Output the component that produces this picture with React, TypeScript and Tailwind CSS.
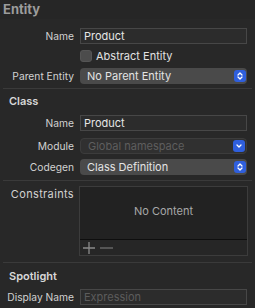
import React from 'react'

const font = { fontFamily: 'Inter, "Liberation Sans", sans-serif' }

function Stepper({ single }: { single?: boolean }) {
  return (
    <div className="w-[12px] h-[12px] rounded-[3px] bg-[#2f5fdd] flex items-center justify-center">
      <svg width="8" height="10" viewBox="0 0 8 10" fill="none" stroke="#ffffff" strokeWidth="1.3" strokeLinecap="round" strokeLinejoin="round">
        {single ? (
          <path d="M2 4l2 2 2-2" />
        ) : (
          <>
            <path d="M2 4l2-2 2 2" />
            <path d="M2 6l2 2 2-2" />
          </>
        )}
      </svg>
    </div>
  )
}

function Row({ label, children, className = '' }: { label: string; children: React.ReactNode; className?: string }) {
  return (
    <div className={`flex items-center ${className}`}>
      <div className="w-[75px] pr-[1px] text-right text-[10.25px] text-[#d2d2d2] leading-none shrink-0">{label}</div>
      <div className="ml-[5px] w-[167px]">{children}</div>
    </div>
  )
}

function Field({ value, placeholder }: { value?: string; placeholder?: string }) {
  return (
    <div className="h-[16px] border border-[#474747] bg-[#2c2c2c] flex items-center px-[3px] text-[11px] leading-none">
      {value ? <span className="text-[#e6e6e6]">{value}</span> : <span className="text-[#5c5c5c]">{placeholder}</span>}
    </div>
  )
}

function Popup({ value, disabled, single }: { value: string; disabled?: boolean; single?: boolean }) {
  return (
    <div
      className={`h-[16px] rounded-[4px] flex items-center justify-between pl-[6px] pr-[1px] text-[11px] leading-none ${
        disabled ? 'bg-[#303030] border border-[#3c3c3c] text-[#5e5e5e]' : 'bg-[#4a4a4a] text-[#e4e4e4]'
      }`}
    >
      <span className="pl-[1px]">{value}</span>
      <Stepper single={single} />
    </div>
  )
}

function SectionTitle({ children }: { children: React.ReactNode }) {
  return <div className="px-[9px] text-[11px] font-semibold text-[#d8d8d8] leading-none">{children}</div>
}

export default function App() {
  return (
    <div className="w-[255px] h-[308px] bg-[#282828] overflow-hidden" style={font}>
      <div className="h-[19px] bg-[#262626] px-[3px] pt-[3px] text-[13px] font-bold text-[#9c9c9c] leading-none">Entity</div>

      <Row label="Name" className="mt-[9px]">
        <Field value="Product" />
      </Row>
      <Row label="" className="mt-[6px]">
        <div className="flex items-center h-[12px]">
          <div className="w-[12px] h-[12px] rounded-[3px] bg-[#4c4c4c] border border-[#555555]" />
          <span className="ml-[4px] text-[11px] text-[#e2e2e2] leading-none">Abstract Entity</span>
        </div>
      </Row>
      <Row label="Parent Entity" className="mt-[6px]">
        <Popup value="No Parent Entity" />
      </Row>

      <div className="mt-[4px] mx-[3px] border-t border-[#3a3a3a]" />

      <div className="mt-[7px]">
        <SectionTitle>Class</SectionTitle>
      </div>
      <Row label="Name" className="mt-[8px]">
        <Field value="Product" />
      </Row>
      <Row label="Module" className="mt-[7px]">
        <Popup value="Global namespace" disabled single />
      </Row>
      <Row label="Codegen" className="mt-[5px]">
        <Popup value="Class Definition" />
      </Row>

      <div className="mt-[5px] mx-[3px] border-t border-[#3a3a3a]" />

      <div className="flex mt-[5px]">
        <div className="w-[75px] pr-[1px] text-right text-[11px] tracking-[0.35px] text-[#d2d2d2] leading-none pt-[3px] shrink-0">Constraints</div>
        <div className="ml-[4px] w-[169px] h-[70px] border border-[#3c3c3c] bg-[#222222] flex flex-col">
          <div className="flex-1 flex items-center justify-center text-[11px] text-[#a8a8a8] leading-none pb-[3px]">No Content</div>
          <div className="h-[16px] border-t border-[#0e0e0e] bg-[#262626] flex items-center pl-[2px] gap-[4px]">
            <svg width="14" height="14" viewBox="0 0 14 14" stroke="#8a8a8a" strokeWidth="1.3">
              <path d="M7 1v12M1 7h12" />
            </svg>
            <svg width="13" height="14" viewBox="0 0 13 14" stroke="#555555" strokeWidth="2">
              <path d="M0 7h13" />
            </svg>
          </div>
        </div>
      </div>

      <div className="mt-[6px] mx-[3px] border-t border-[#3a3a3a]" />

      <div className="mt-[8px]">
        <SectionTitle>Spotlight</SectionTitle>
      </div>
      <Row label="Display Name" className="mt-[7px]">
        <Field placeholder="Expression" />
      </Row>
    </div>
  )
}
